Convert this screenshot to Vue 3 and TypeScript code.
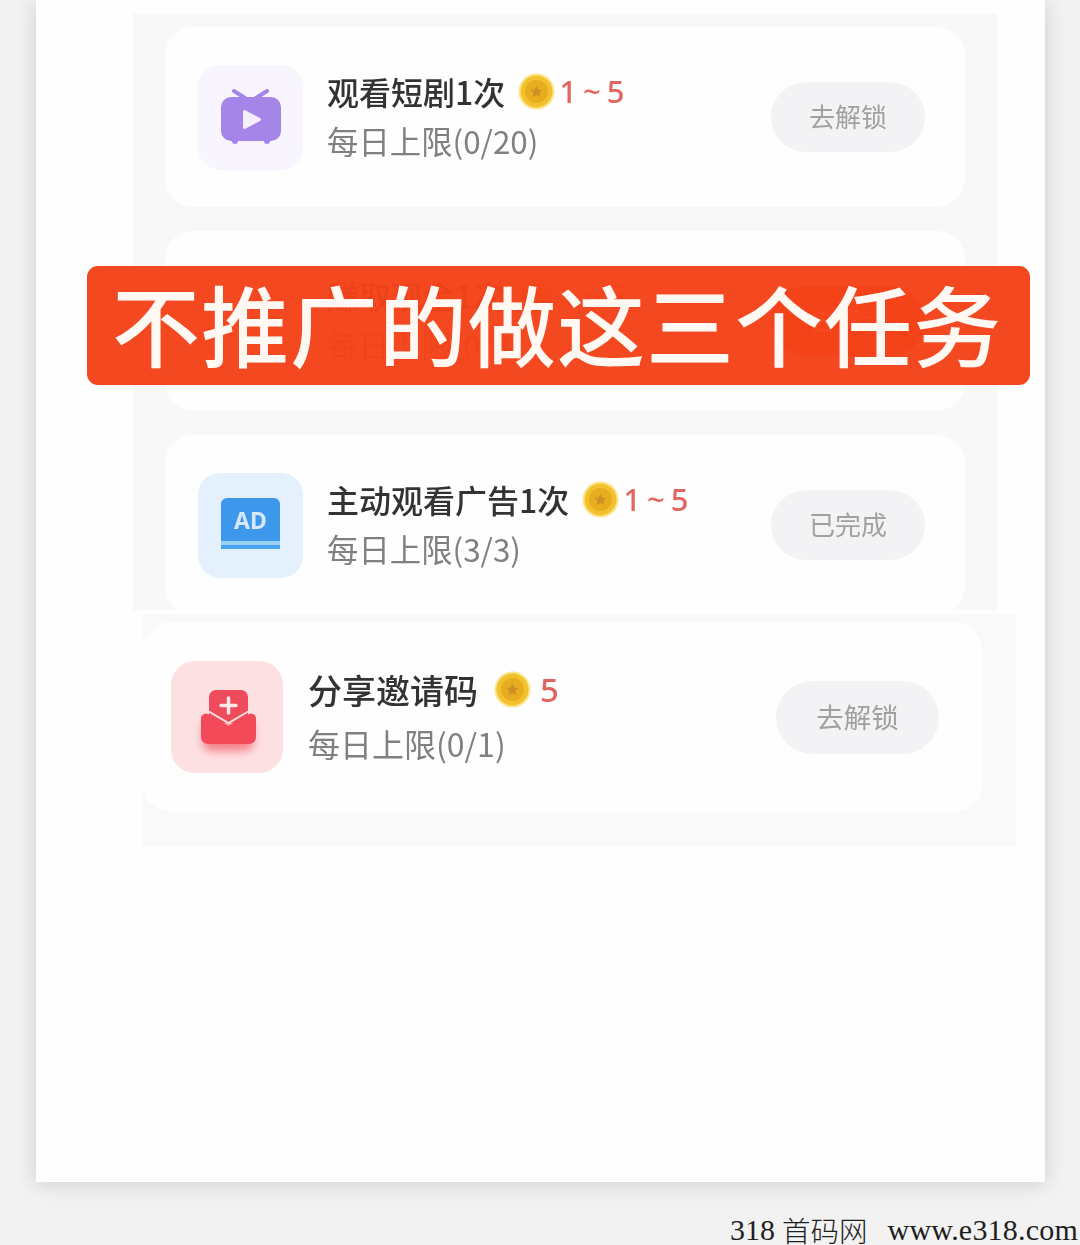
<script setup lang="ts">
interface Task {
  title: string
  limit: string
  reward: string
  action: string
  icon: 'tv' | 'gift' | 'ad'
}

const upperTasks: Task[] = [
  { title: '观看短剧1次', limit: '每日上限(0/20)', reward: '1 ~ 5', action: '去解锁', icon: 'tv' },
  { title: '赚取现金1次', limit: '每日上限(0/3)', reward: '1 ~ 5', action: '去解锁', icon: 'gift' },
  { title: '主动观看广告1次', limit: '每日上限(3/3)', reward: '1 ~ 5', action: '已完成', icon: 'ad' }
]
</script>

<template>
  <div class="page">
    <main class="sheet">
      <section class="panel upper">
        <article v-for="task in upperTasks" :key="task.title" class="card" :class="'card-' + task.icon">
          <div class="tile" :class="'tile-' + task.icon">
            <svg v-if="task.icon === 'tv'" width="105" height="105" viewBox="0 0 105 105">
              <path d="M36 26l11 7M69 26l-11 7" stroke="#a585e8" stroke-width="4" stroke-linecap="round" fill="none" />
              <rect x="23" y="32" width="60" height="44" rx="10" fill="#a585e8" />
              <circle cx="37" cy="76" r="3" fill="#a585e8" />
              <circle cx="69" cy="76" r="3" fill="#a585e8" />
              <path d="M45 46.500a1.500 1.500 0 0 1 2.300-1.300l15 8a1.500 1.500 0 0 1 0 2.600l-15 8a1.500 1.500 0 0 1-2.300-1.300z" fill="#f4eefe" />
            </svg>
            <svg v-else-if="task.icon === 'ad'" width="105" height="105" viewBox="0 0 105 105">
              <path d="M23 31a6 6 0 0 1 6-6h47a6 6 0 0 1 6 6v37H23z" fill="#3d97ea" />
              <rect x="23" y="68" width="59" height="4" fill="#9ad0f7" />
              <rect x="23" y="72" width="59" height="4" fill="#4aa3ee" />
              <text x="52.500" y="56" class="ad-text" text-anchor="middle">AD</text>
            </svg>
          </div>
          <div class="copy">
            <div class="title-line">
              <span class="title">{{ task.title }}</span>
              <svg class="coin" width="37" height="37" viewBox="0 0 37 37">
                <circle cx="18.500" cy="18.500" r="18" fill="#fbe58e" />
                <circle cx="18.500" cy="18.500" r="16" fill="#f2c22e" />
                <circle cx="18.500" cy="18.500" r="11.500" fill="#e6ad1e" />
                <path d="M18.500 12.500l1.800 3.900 4.200.5-3.100 2.900.8 4.200-3.700-2.100-3.700 2.100.8-4.200-3.100-2.900 4.200-.5z" fill="#cf8f24" />
              </svg>
              <span class="reward">{{ task.reward }}</span>
            </div>
            <p class="limit">{{ task.limit }}</p>
          </div>
          <span class="action">{{ task.action }}</span>
        </article>
      </section>

      <section class="panel lower">
        <article class="card share-card">
          <div class="tile tile-share">
            <svg width="112" height="112" viewBox="0 0 112 112">
              <defs>
                <filter id="mail-shadow" x="-30%" y="-30%" width="160%" height="170%">
                  <feGaussianBlur stdDeviation="5" />
                </filter>
              </defs>
              <rect x="32" y="60" width="50" height="30" rx="8" fill="#f57f89" filter="url(#mail-shadow)" />
              <path d="M38 36a7 7 0 0 1 7-7h25a7 7 0 0 1 7 7v26H38z" fill="#ee4c5a" />
              <path d="M50 44.500h15M57.500 37v15" stroke="#fde8ea" stroke-width="3.500" stroke-linecap="round" />
              <path d="M30 57a5 5 0 0 1 7-4l20.500 12L78 53a5 5 0 0 1 7 4v19a7 7 0 0 1-7 7H37a7 7 0 0 1-7-7z" fill="#f24a58" />
              <path d="M37 50l20.500 12L78 50" fill="none" stroke="#fde0e2" stroke-width="2" />
            </svg>
          </div>
          <div class="copy">
            <div class="title-line">
              <span class="title">分享邀请码</span>
              <svg class="coin" width="37" height="37" viewBox="0 0 37 37">
                <circle cx="18.500" cy="18.500" r="18" fill="#fbe58e" />
                <circle cx="18.500" cy="18.500" r="16" fill="#f2c22e" />
                <circle cx="18.500" cy="18.500" r="11.500" fill="#e6ad1e" />
                <path d="M18.500 12.500l1.800 3.900 4.200.5-3.100 2.900.8 4.200-3.700-2.100-3.700 2.100.8-4.200-3.100-2.900 4.200-.5z" fill="#cf8f24" />
              </svg>
              <span class="reward">5</span>
            </div>
            <p class="limit">每日上限(0/1)</p>
          </div>
          <span class="action">去解锁</span>
        </article>
      </section>
    </main>

    <div class="banner">不推广的做这三个任务</div>

    <footer class="mark">
      <span class="mono">318</span><span class="cjk">首码网</span><span class="mono gap">www.e318.com</span>
    </footer>
  </div>
</template>

<style scoped>
.page {
  position: relative;
  width: 1080px;
  height: 1245px;
  overflow: hidden;
  background: #f2f2f2;
  font-family: "Noto Sans CJK SC", "Noto Sans", sans-serif;
}

.sheet {
  box-sizing: border-box;
  width: 1009px;
  height: 1182px;
  margin-left: 36px;
  padding-top: 14px;
  background: #fefefe;
  box-shadow: 0 2px 20px rgba(0, 0, 0, 0.15);
}

.panel {
  box-sizing: border-box;
  background: #f8f8f8;
}

.upper {
  display: flex;
  flex-direction: column;
  gap: 24px;
  width: 864px;
  height: 596px;
  margin-left: 97px;
  padding: 13px 32px 0;
  overflow: hidden;
}

.lower {
  width: 873px;
  height: 232px;
  margin: 4px 0 0 107px;
  padding-top: 8px;
  background: #f9f9f9;
}

.card {
  flex: none;
  display: flex;
  align-items: center;
  box-sizing: border-box;
  width: 800px;
  height: 180px;
  padding: 0 40px 0 33px;
  border-radius: 28px;
  background: #fefefe;
  filter: blur(0.5px);
}

.tile {
  flex: none;
  width: 105px;
  height: 105px;
  border-radius: 22px;
}

.tile svg {
  display: block;
}

.tile-tv {
  background: #f8f5fe;
}

.tile-gift {
  background: #fff1ec;
}

.tile-ad {
  background: #e4f1fd;
}

.tile-share {
  width: 112px;
  height: 112px;
  border-radius: 24px;
  background: #fde0e2;
}

.ad-text {
  fill: #d5e9fb;
  font-family: "Noto Sans", sans-serif;
  font-size: 23px;
  font-weight: 700;
}

.copy {
  flex: 1;
  min-width: 0;
  margin-left: 24px;
}

.title-line {
  display: flex;
  align-items: center;
  height: 46px;
  margin-top: -2px;
}

.title {
  color: #333;
  font-size: 32px;
  font-weight: 500;
  line-height: 46px;
}

.coin {
  flex: none;
  margin: 0 4px 0 13px;
}

.reward {
  color: #e0665f;
  font-family: "Noto Sans", sans-serif;
  font-size: 31px;
  font-weight: 500;
  letter-spacing: -1px;
  line-height: 46px;
}

.limit {
  margin: 4px 0 0;
  color: #808080;
  font-size: 31.400px;
  font-weight: 400;
  line-height: 46px;
  white-space: nowrap;
}

.action {
  flex: none;
  width: 154px;
  height: 70px;
  border-radius: 35px;
  background: #f3f3f5;
  color: #a0a0a0;
  font-size: 26px;
  line-height: 68px;
  text-align: center;
}

.card-gift .action {
  background: #f23a14;
  color: #fff;
}

.share-card {
  width: 839px;
  height: 190px;
  padding: 0 43px 0 28px;
}

.share-card .copy {
  margin-left: 25px;
}

.share-card .title {
  font-size: 34px;
}

.share-card .title-line {
  height: 50px;
  margin-top: -4px;
}

.share-card .limit {
  margin-top: 5px;
  font-size: 32px;
}

.share-card .coin {
  margin: 0 9px 0 16px;
}

.share-card .reward {
  font-size: 33px;
}

.share-card .action {
  width: 163px;
  height: 73px;
  border-radius: 37px;
  font-size: 27.500px;
  line-height: 71px;
}

.banner {
  position: absolute;
  top: 266px;
  left: 87px;
  box-sizing: border-box;
  width: 943px;
  height: 119px;
  padding-left: 25px;
  border-radius: 11px;
  background: rgba(244, 66, 26, 0.97);
  color: #fff8f3;
  font-size: 88px;
  font-weight: 500;
  letter-spacing: 1px;
  line-height: 112px;
  white-space: nowrap;
}

.mark {
  position: absolute;
  top: 1214px;
  left: 730px;
  display: flex;
  width: 350px;
  color: #1f1f1f;
  line-height: 31px;
  white-space: nowrap;
}

.mono {
  font-family: "Liberation Serif", serif;
  font-size: 30px;
}

.cjk {
  margin-left: 7px;
  font-family: "Noto Sans CJK SC", sans-serif;
  font-size: 28.500px;
  font-weight: 300;
}

.gap {
  margin-left: 20px;
  letter-spacing: 0.200px;
}
</style>

<style>
html,
body {
  margin: 0;
  background: #f2f2f2;
}
</style>
